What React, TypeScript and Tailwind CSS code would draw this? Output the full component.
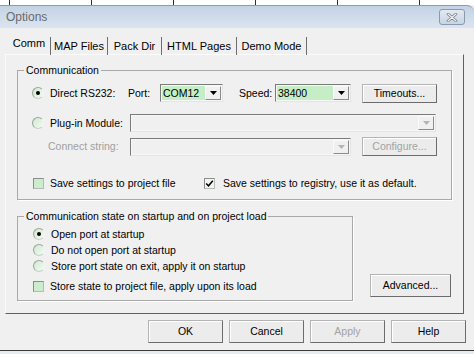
import React from 'react';

// --- small win-classic widgets ---

function Radio({ checked }: { checked?: boolean }) {
  return (
    <span className="flex items-center justify-center w-[12px] h-[12px] shrink-0 rounded-full border border-t-[#9aa39a] border-l-[#9aa39a] border-b-[#c8d0c8] border-r-[#f4f4f4] bg-[linear-gradient(135deg,#cfe9cf,#f4fbf4)]">
      {checked && <span className="w-[4px] h-[4px] rounded-full bg-black" />}
    </span>
  );
}

function Check({ checked }: { checked?: boolean }) {
  return (
    <span
      className={`flex items-center justify-center w-[11px] h-[11px] shrink-0 border border-t-[#8c8c8c] border-l-[#8c8c8c] border-b-[#b8b8b8] border-r-[#b8b8b8] ${
        checked ? 'bg-[#eef7ee]' : 'bg-[#cdeccd]'
      }`}
    >
      {checked && (
        <svg width="9" height="9" viewBox="0 0 9 9">
          <path d="M1.2 4.5 L3.5 6.8 L7.8 1.8" fill="none" stroke="#000" strokeWidth="1.5" />
        </svg>
      )}
    </span>
  );
}

function Arrow({ disabled }: { disabled?: boolean }) {
  return (
    <span className="flex items-center justify-center w-[16px] h-full border border-t-[#fafafa] border-l-[#fafafa] border-r-[#8a8a8a] border-b-[#8a8a8a] bg-[#f0f0f0]">
      <svg width="7" height="4" viewBox="0 0 7 4">
        <path d="M0 0 H7 L3.5 4 Z" fill={disabled ? '#b4b4b4' : '#000'} />
      </svg>
    </span>
  );
}

function Combo({ value, width, disabled }: { value?: string; width: number; disabled?: boolean }) {
  return (
    <div
      className="flex h-[18px] shrink-0 border border-t-[#7b7b7b] border-l-[#7b7b7b] border-r-[#e4e4e4] border-b-[#e4e4e4] p-[1px] bg-[#f7f7f7]"
      style={{ width }}
    >
      <div className={`flex-1 flex items-center px-[1px] ${disabled ? 'bg-[#f0f0f0]' : 'bg-[#c6eec6]'}`}>{value}</div>
      <Arrow disabled={disabled} />
    </div>
  );
}

function Btn({ children, w, h = 19, disabled }: { children: React.ReactNode; w: number; h?: number; disabled?: boolean }) {
  return (
    <div
      className={`flex items-center justify-center shrink-0 border border-t-[#b4b4b4] border-l-[#b4b4b4] border-r-[#6c6c6c] border-b-[#6c6c6c] bg-[#ececec] shadow-[inset_1px_1px_0_#ffffff] ${
        disabled ? 'text-[#a3a3a3]' : 'text-black'
      }`}
      style={{ width: w, height: h }}
    >
      {children}
    </div>
  );
}

const tabs = [
  { name: 'MAP Files', w: 57 },
  { name: 'Pack Dir', w: 54 },
  { name: 'HTML Pages', w: 75 },
  { name: 'Demo Mode', w: 70 },
];

export default function App() {
  return (
    <div className="w-[474px] h-[354px] overflow-hidden bg-[#f0f0f0] text-[10.5px] leading-[13px] text-black font-['Liberation_Sans',Arial,sans-serif]">
      {/* window behind */}
      <div className="flex h-[5px] bg-white pl-[9px]">
        {[0, 1, 2, 3, 4, 5].map((i) => (
          <div key={i} className="w-[82px] shrink-0 border-l border-[#303030]" />
        ))}
      </div>

      {/* title bar */}
      <div className="flex items-center h-[23px] rounded-tr-[7px] border-t border-[#8a9bb0] bg-[linear-gradient(#c3d2e4,#dbe5f0)] pl-[6px] pr-[9px]">
        <span className="text-[12px] text-[#6a6a6a]">Options</span>
        <div className="ml-auto flex items-center justify-center w-[26px] h-[16px] rounded-[3px] border border-[#8a9aae] bg-[linear-gradient(#e2e9f2,#c9d5e4)]">
          <svg width="12" height="9" viewBox="0 0 12 9">
            <path d="M2 1 L10 8 M10 1 L2 8" stroke="#6b7480" strokeWidth="2.6" strokeLinecap="round" />
            <path d="M2 1 L10 8 M10 1 L2 8" stroke="#f5f7fa" strokeWidth="1.2" strokeLinecap="round" />
          </svg>
        </div>
      </div>

      {/* tabs */}
      <div className="flex items-end h-[26px] pl-[8px] text-[11px]">
        <div className="flex items-center justify-center w-[42px] h-[21px]">Comm</div>
        {tabs.map((t, i) => (
          <div
            key={t.name}
            className={`flex items-center justify-center h-[18px] mb-[-1px] border-l border-[#6e6e6e] ${i === tabs.length - 1 ? 'border-r' : ''}`}
            style={{ width: t.w + (i === tabs.length - 1 ? 1 : 0) }}
          >
            {t.name}
          </div>
        ))}
      </div>

      {/* tab panel */}
      <div className="ml-[5px] w-[459px] h-[260px] border border-t-[#fbfbfb] border-l-[#fbfbfb] border-r-[#606060] border-b-[#606060] px-[11px]">
        <fieldset className="mt-[9px] w-[435px] border border-[#a9a9a9] shadow-[1px_1px_0_#ffffff] pb-[9px]">
          <legend className="ml-[6px] px-[2px] leading-[12px]">Communication</legend>

          <div className="flex items-center h-[18px] mt-[8px] pl-[14px]">
            <div className="flex items-center gap-[6px] w-[96px]">
              <Radio checked />
              <span>Direct RS232:</span>
            </div>
            <span className="w-[32px]">Port:</span>
            <Combo value="COM12" width={63} />
            <span className="ml-[16px] w-[36px]">Speed:</span>
            <Combo value="38400" width={76} />
            <div className="ml-[11px]">
              <Btn w={75}>Timeouts...</Btn>
            </div>
          </div>

          <div className="flex items-center h-[18px] mt-[12px] pl-[14px]">
            <div className="flex items-center gap-[6px] w-[98px]">
              <Radio />
              <span>Plug-in Module:</span>
            </div>
            <Combo width={306} disabled />
          </div>

          <div className="flex items-center h-[19px] mt-[5px] pl-[14px]">
            <div className="w-[98px] pl-[16px] text-[#a0a0a0]">Connect string:</div>
            <Combo width={221} disabled />
            <div className="ml-[11px]">
              <Btn w={75} disabled>
                Configure...
              </Btn>
            </div>
          </div>

          <div className="flex items-center h-[14px] mt-[20px] pl-[15px]">
            <div className="flex items-center gap-[6px] w-[171px]">
              <Check />
              <span>Save settings to project file</span>
            </div>
            <div className="flex items-center gap-[8px]">
              <Check checked />
              <span>Save settings to registry, use it as default.</span>
            </div>
          </div>
        </fieldset>

        <div className="flex items-end mt-[10px]">
          <fieldset className="w-[336px] border border-[#a9a9a9] shadow-[1px_1px_0_#ffffff] pb-[6px]">
            <legend className="ml-[6px] px-[2px] leading-[12px]">Communication state on startup and on project load</legend>
            <div className="flex flex-col pl-[15px] mt-[4px]">
              {[
                { t: 'Open port at startup', c: true },
                { t: 'Do not open port at startup' },
                { t: 'Store port state on exit, apply it on startup' },
              ].map((r) => (
                <div key={r.t} className="flex items-center gap-[6px] h-[16px]">
                  <Radio checked={r.c} />
                  <span>{r.t}</span>
                </div>
              ))}
              <div className="flex items-center gap-[6px] h-[16px] mt-[4px]">
                <Check />
                <span>Store state to project file, apply upon its load</span>
              </div>
            </div>
          </fieldset>
          <div className="ml-[17px] mb-[4px]">
            <Btn w={81} h={23}>
              Advanced...
            </Btn>
          </div>
        </div>
      </div>

      {/* dialog buttons */}
      <div className="flex gap-[6px] pl-[148px] mt-[6px]">
        <Btn w={75} h={23}>OK</Btn>
        <Btn w={75} h={23}>Cancel</Btn>
        <Btn w={75} h={23} disabled>
          Apply
        </Btn>
        <Btn w={75} h={23}>Help</Btn>
      </div>

      <div className="mt-[7px] h-[1px] bg-[#3c3c3c]" />
      <div className="h-[4px] bg-[#e6ecf2]" />
    </div>
  );
}
